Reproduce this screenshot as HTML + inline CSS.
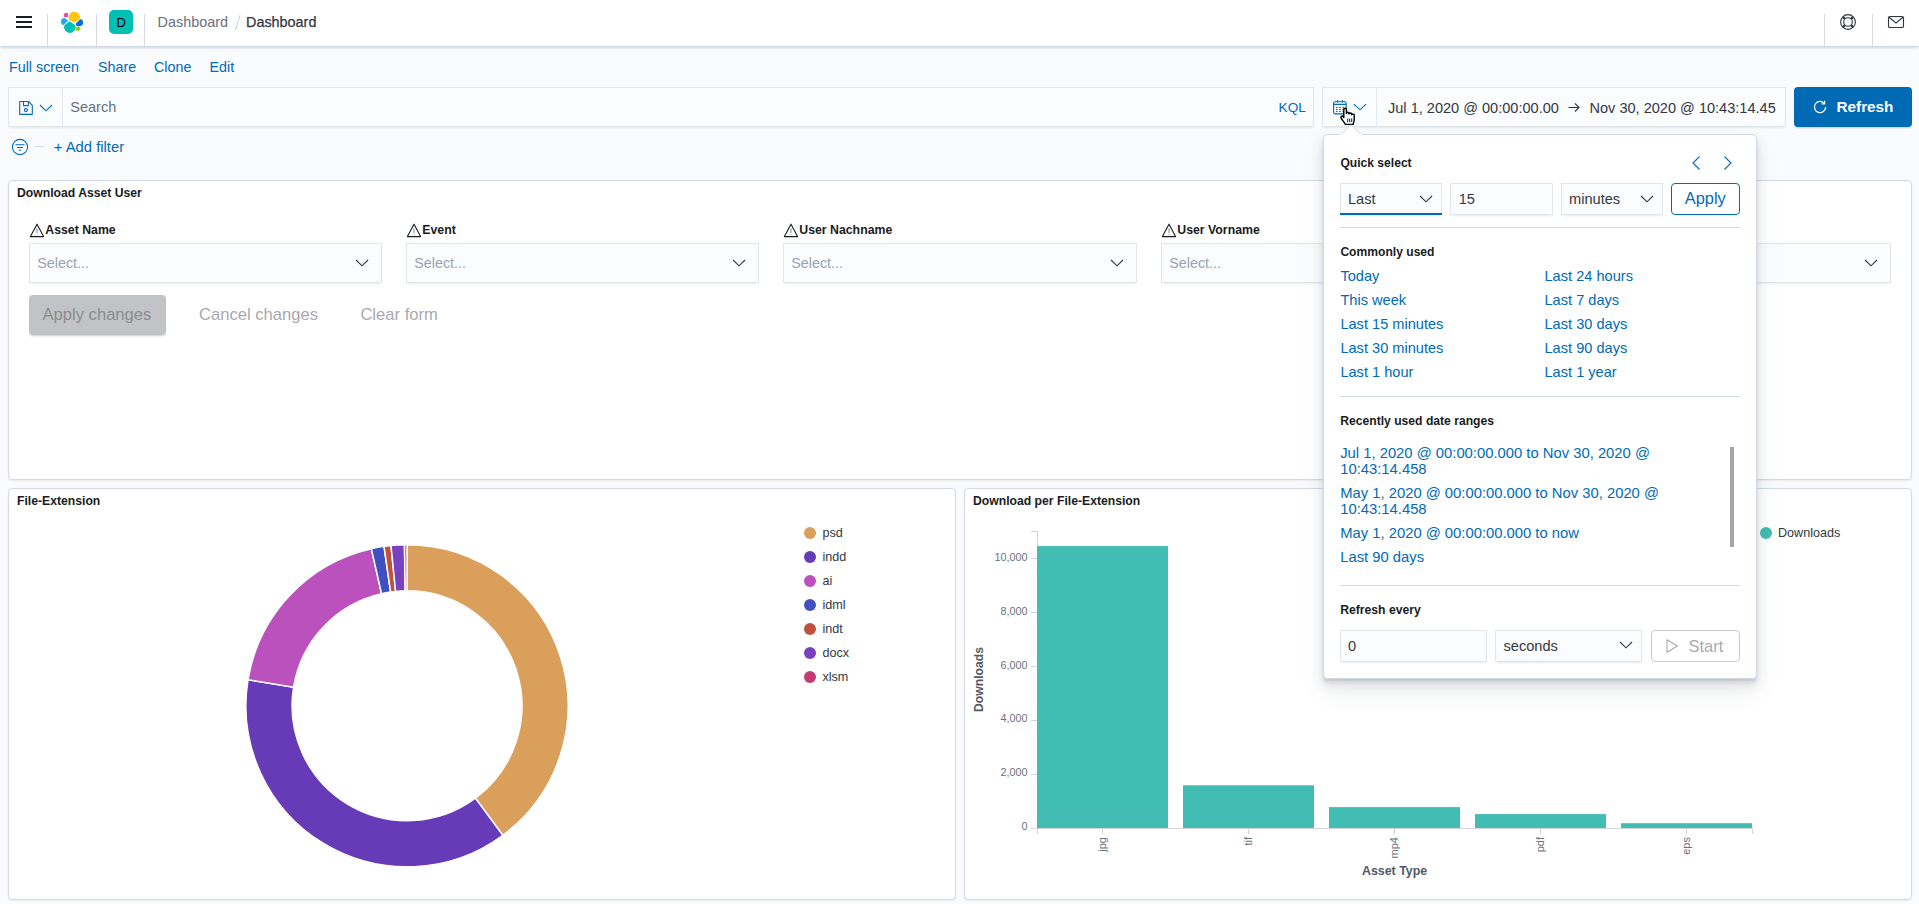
<!DOCTYPE html>
<html><head><meta charset="utf-8">
<style>
*{box-sizing:border-box;margin:0;padding:0}
html,body{width:1919px;height:904px;overflow:hidden}
body{background:#fafbfd;font-family:"Liberation Sans",sans-serif;color:#343741;position:relative}
.a{position:absolute}
.t{position:absolute;white-space:nowrap;line-height:1}
.hdr{left:0;top:0;width:1919px;height:47px;background:#fff;border-bottom:1px solid #d3dae6;box-shadow:0 2px 2px -1px rgba(152,162,179,.3),0 1px 5px -2px rgba(152,162,179,.3)}
.vsep{position:absolute;top:14px;width:1px;height:32px;background:#d3dae6}
.ctl{position:absolute;background:#fbfcfd;box-shadow:inset 0 0 0 1px rgba(15,36,56,.1),0 1px 1px -1px rgba(152,162,179,.2),0 3px 2px -2px rgba(152,162,179,.2)}
.panel{position:absolute;background:#fff;border:1px solid #d3dae6;border-radius:4px;box-shadow:0 1px 2px rgba(152,162,179,.15)}
svg{position:absolute;overflow:visible}
</style></head><body>
<div class="a hdr"></div>
<div class="a" style="left:16px;top:16px;width:16px;height:2px;background:#1a1c21"></div>
<div class="a" style="left:16px;top:21px;width:16px;height:2px;background:#1a1c21"></div>
<div class="a" style="left:16px;top:26px;width:16px;height:2px;background:#1a1c21"></div>
<div class="vsep" style="left:47px"></div>
<div class="vsep" style="left:96px"></div>
<div class="vsep" style="left:144px"></div>
<div class="vsep" style="left:1824px"></div>
<div class="vsep" style="left:1872px"></div>
<svg style="left:0;top:0" width="120" height="46">
<path d="M65.4 12.9H68V17.3H65.4A1.6 1.6 0 0 1 63.8 15.7V14.5A1.6 1.6 0 0 1 65.4 12.9Z" fill="#F04E98"/>
<path d="M69.2 19.9A5.7 5.7 0 1 1 79.7 19.3L74.4 22.6Z" fill="#FEC514"/>
<path d="M64.3 17.9L68.3 20.5L63.6 24.9Q61 24.6 61 21.4Q61.2 17.9 64.3 17.9Z" fill="#1BA9F5"/>
<path d="M64.3 25.3L69.5 21.3L75.3 25.2A5.8 5.8 0 1 1 64.3 25.3Z" fill="#00BFB3"/>
<path d="M75.7 23.5L80.5 18.9Q83.2 19.8 83.1 22.6Q83 25.8 80 26.2L77.3 26.2Q75.7 25.6 75.7 23.5Z" fill="#0077CC"/>
<path d="M76.1 27H79Q80.4 27 80.4 28.6Q80.2 31 77.3 31Q76.1 31 76.1 30Z" fill="#93C90E"/>
</svg>
<div class="a" style="left:109px;top:10px;width:24px;height:24px;border-radius:5px;background:#00bfb3"></div>
<div class="t" style="left:116.5px;top:15.50px;font-size:13px;color:#000;font-weight:normal;">D</div>
<div class="t" style="left:157.6px;top:14.61px;font-size:14.4px;color:#69707d;font-weight:normal;">Dashboard</div>
<svg style="left:0;top:0" width="260" height="46"><line x1="240.2" y1="15" x2="235.2" y2="30.7" stroke="#c9d0dc" stroke-width="1"/></svg>
<div class="t" style="left:246.0px;top:14.61px;font-size:14.4px;color:#343741;font-weight:normal;-webkit-text-stroke:0.25px #343741">Dashboard</div>
<svg style="left:1838px;top:12px" width="20" height="20" viewBox="0 0 20 20">
<circle cx="10" cy="10" r="7.4" fill="none" stroke="#343741" stroke-width="1.1"/>
<circle cx="10" cy="10" r="4.3" fill="none" stroke="#343741" stroke-width="1.1"/>
<path d="M4.9 4.9L7 7M15.1 4.9L13 7M4.9 15.1L7 13M15.1 15.1L13 13" stroke="#343741" stroke-width="2.2"/>
</svg>
<svg style="left:1886px;top:14px" width="20" height="16" viewBox="0 0 20 16">
<rect x="2.5" y="2.5" width="15" height="11" rx="1.3" fill="none" stroke="#343741" stroke-width="1.1"/>
<path d="M3 3.3L10 9L17 3.3" fill="none" stroke="#343741" stroke-width="1.1"/>
</svg>
<div class="t" style="left:9.0px;top:60.00px;font-size:14.3px;color:#006bb4;font-weight:normal;">Full screen</div>
<div class="t" style="left:98.0px;top:60.00px;font-size:14.3px;color:#006bb4;font-weight:normal;">Share</div>
<div class="t" style="left:154.0px;top:60.00px;font-size:14.3px;color:#006bb4;font-weight:normal;">Clone</div>
<div class="t" style="left:209.5px;top:60.00px;font-size:14.3px;color:#006bb4;font-weight:normal;">Edit</div>
<div class="ctl" style="left:8px;top:87px;width:1306px;height:40px"></div>
<div class="a" style="left:62px;top:88px;width:1px;height:38px;background:#e3e7ee"></div>
<svg style="left:18px;top:100px" width="16" height="16" viewBox="0 0 16 16">
<path d="M1.7 1.5H10.5L14.3 5.3V14.4H1.7Z" fill="none" stroke="#006bb4" stroke-width="1.1" stroke-linejoin="round"/>
<path d="M5.5 1.5V5.6H10.3V1.5" fill="none" stroke="#006bb4" stroke-width="1.1"/>
<circle cx="7.9" cy="10.1" r="1.5" fill="none" stroke="#006bb4" stroke-width="1.1"/>
</svg>
<svg style="left:39px;top:104px" width="14" height="8" viewBox="0 0 14 8"><path d="M1 1L7 6.8L13 1" fill="none" stroke="#006bb4" stroke-width="1.1"/></svg>
<div class="t" style="left:70.3px;top:100.03px;font-size:14.5px;color:#69707d;font-weight:normal;">Search</div>
<div class="t" style="left:1278.6px;top:100.89px;font-size:13.6px;color:#006bb4;font-weight:normal;">KQL</div>
<div class="ctl" style="left:1322px;top:87px;width:464px;height:40px"></div>
<div class="a" style="left:1376px;top:88px;width:1px;height:38px;background:#e3e7ee"></div>
<svg style="left:1332px;top:99px" width="16" height="17" viewBox="0 0 16 17">
<rect x="1.6" y="2.7" width="12.6" height="12.2" rx="1.6" fill="none" stroke="#006bb4" stroke-width="1.1"/>
<path d="M1.6 5.4H14.2M5.6 1V3.6M10.3 1V3.6" stroke="#006bb4" stroke-width="1.1"/>
<path d="M4 8.5h1.6M7.2 8.5h1.6M10.4 8.5h1.6M4 10.5h1.6M7.2 10.5h1.6M10.4 10.5h1.6M4 12.5h1.6M7.2 12.5h1.6M10.4 12.5h1.6" stroke="#006bb4" stroke-width="1.1"/>
</svg>
<svg style="left:1353px;top:103px" width="14" height="8" viewBox="0 0 14 8"><path d="M1 1.2L7 6.8L13 1.2" fill="none" stroke="#006bb4" stroke-width="1.1"/></svg>
<svg style="left:1339.5px;top:107px" width="17" height="19" viewBox="0 0 17 19">
<path d="M3.8 8.5V2.6C3.8 0.8 6.4 0.8 6.4 2.6V6.4C6.4 4.9 9 4.9 9 6.4V7C9 5.6 11.6 5.6 11.6 7V7.8C11.6 6.6 14.2 6.6 14.2 7.8V12.5C14.2 14.6 13.6 16 13 17.4H5.4C4.4 15.6 2.4 13.4 1.1 11.2C0.3 9.6 1.8 8.4 2.8 9.4L3.8 10.6Z" fill="#fff" stroke="#000" stroke-width="1.4" stroke-linejoin="round"/>
<path d="M7.7 11.5V15.2M9.7 11.5V15.2M11.7 11.5V15.2" stroke="#000" stroke-width="0.9"/>
</svg>
<div class="t" style="left:1388.0px;top:100.58px;font-size:14.55px;color:#343741;font-weight:normal;">Jul 1, 2020 @ 00:00:00.00</div>
<svg style="left:1566px;top:101px" width="16" height="12" viewBox="0 0 16 12"><path d="M2.5 6.5H13M9 2.5L13 6.5L9 10.5" fill="none" stroke="#343741" stroke-width="1.1"/></svg>
<div class="t" style="left:1589.5px;top:100.58px;font-size:14.55px;color:#343741;font-weight:normal;">Nov 30, 2020 @ 10:43:14.45</div>
<div class="a" style="left:1794px;top:87px;width:118px;height:40px;background:#006bb4;border-radius:4px;box-shadow:0 2px 2px -1px rgba(54,97,126,.3)"></div>
<svg style="left:1812px;top:99px" width="16" height="16" viewBox="0 0 16 16">
<path d="M12.2 4.3A5.6 5.6 0 1 0 13.6 8" fill="none" stroke="#fff" stroke-width="1.2"/>
<path d="M12.6 1.8V4.8H9.6" fill="none" stroke="#fff" stroke-width="1.2"/>
</svg>
<div class="t" style="left:1836.5px;top:99.15px;font-size:15.3px;color:#fff;font-weight:bold;">Refresh</div>
<svg style="left:11px;top:138px" width="18" height="18" viewBox="0 0 18 18">
<circle cx="9" cy="9" r="7.6" fill="none" stroke="#006bb4" stroke-width="1.1"/>
<path d="M4.5 6.8H13.5M6 9.5H12M7.7 12.2H10.3" stroke="#006bb4" stroke-width="1.1"/>
</svg>
<div class="a" style="left:34px;top:146px;width:10px;height:1px;background:#d3dae6"></div>
<div class="t" style="left:53.8px;top:139.77px;font-size:14.8px;color:#006bb4;font-weight:normal;">+ Add filter</div>
<div class="panel" style="left:8px;top:180px;width:1904px;height:300px"></div>
<div class="t" style="left:17.0px;top:186.67px;font-size:12.2px;color:#1a1c21;font-weight:bold;">Download Asset User</div>
<div class="ctl" style="left:29.0px;top:243px;width:353px;height:40px"></div>
<svg style="left:29.0px;top:223px" width="16" height="15" viewBox="0 0 16 15"><path d="M8 1.2L14.6 13.6H1.4Z" fill="none" stroke="#1a1c21" stroke-width="1.1" stroke-linejoin="round"/><path d="M8 5.5V10" stroke="#98a2b3" stroke-width="1.3"/><path d="M8 11.3V12.3" stroke="#98a2b3" stroke-width="1.1"/></svg>
<div class="t" style="left:45.3px;top:223.59px;font-size:12.3px;color:#1a1c21;font-weight:bold;">Asset Name</div>
<div class="t" style="left:37.3px;top:255.90px;font-size:14.3px;color:#98a2b3;font-weight:normal;">Select...</div>
<svg style="left:355.0px;top:259px" width="14" height="8" viewBox="0 0 14 8"><path d="M1 1L7 6.8L13 1" fill="none" stroke="#343741" stroke-width="1.1"/></svg>
<div class="ctl" style="left:406.0px;top:243px;width:353px;height:40px"></div>
<svg style="left:406.0px;top:223px" width="16" height="15" viewBox="0 0 16 15"><path d="M8 1.2L14.6 13.6H1.4Z" fill="none" stroke="#1a1c21" stroke-width="1.1" stroke-linejoin="round"/><path d="M8 5.5V10" stroke="#98a2b3" stroke-width="1.3"/><path d="M8 11.3V12.3" stroke="#98a2b3" stroke-width="1.1"/></svg>
<div class="t" style="left:422.3px;top:223.59px;font-size:12.3px;color:#1a1c21;font-weight:bold;">Event</div>
<div class="t" style="left:414.3px;top:255.90px;font-size:14.3px;color:#98a2b3;font-weight:normal;">Select...</div>
<svg style="left:732.0px;top:259px" width="14" height="8" viewBox="0 0 14 8"><path d="M1 1L7 6.8L13 1" fill="none" stroke="#343741" stroke-width="1.1"/></svg>
<div class="ctl" style="left:783.0px;top:243px;width:354px;height:40px"></div>
<svg style="left:783.0px;top:223px" width="16" height="15" viewBox="0 0 16 15"><path d="M8 1.2L14.6 13.6H1.4Z" fill="none" stroke="#1a1c21" stroke-width="1.1" stroke-linejoin="round"/><path d="M8 5.5V10" stroke="#98a2b3" stroke-width="1.3"/><path d="M8 11.3V12.3" stroke="#98a2b3" stroke-width="1.1"/></svg>
<div class="t" style="left:799.3px;top:223.59px;font-size:12.3px;color:#1a1c21;font-weight:bold;">User Nachname</div>
<div class="t" style="left:791.3px;top:255.90px;font-size:14.3px;color:#98a2b3;font-weight:normal;">Select...</div>
<svg style="left:1110.0px;top:259px" width="14" height="8" viewBox="0 0 14 8"><path d="M1 1L7 6.8L13 1" fill="none" stroke="#343741" stroke-width="1.1"/></svg>
<div class="ctl" style="left:1161.0px;top:243px;width:353px;height:40px"></div>
<svg style="left:1161.0px;top:223px" width="16" height="15" viewBox="0 0 16 15"><path d="M8 1.2L14.6 13.6H1.4Z" fill="none" stroke="#1a1c21" stroke-width="1.1" stroke-linejoin="round"/><path d="M8 5.5V10" stroke="#98a2b3" stroke-width="1.3"/><path d="M8 11.3V12.3" stroke="#98a2b3" stroke-width="1.1"/></svg>
<div class="t" style="left:1177.3px;top:223.59px;font-size:12.3px;color:#1a1c21;font-weight:bold;">User Vorname</div>
<div class="t" style="left:1169.3px;top:255.90px;font-size:14.3px;color:#98a2b3;font-weight:normal;">Select...</div>
<svg style="left:1487.0px;top:259px" width="14" height="8" viewBox="0 0 14 8"><path d="M1 1L7 6.8L13 1" fill="none" stroke="#343741" stroke-width="1.1"/></svg>
<div class="ctl" style="left:1538.0px;top:243px;width:353px;height:40px"></div>
<svg style="left:1864.0px;top:259px" width="14" height="8" viewBox="0 0 14 8"><path d="M1 1L7 6.8L13 1" fill="none" stroke="#343741" stroke-width="1.1"/></svg>
<div class="a" style="left:29px;top:295px;width:137px;height:40px;background:#c2c3c6;border-radius:4px;box-shadow:0 2px 2px -1px rgba(54,97,126,.3)"></div>
<div class="t" style="left:42.5px;top:307.45px;font-size:16.6px;color:#8b8c90;font-weight:normal;">Apply changes</div>
<div class="t" style="left:199.0px;top:307.45px;font-size:16.6px;color:#a8a9ad;font-weight:normal;">Cancel changes</div>
<div class="t" style="left:360.4px;top:307.45px;font-size:16.6px;color:#a8a9ad;font-weight:normal;">Clear form</div>
<div class="panel" style="left:8px;top:488px;width:948px;height:412px"></div>
<div class="t" style="left:17.0px;top:494.67px;font-size:12.2px;color:#1a1c21;font-weight:bold;">File-Extension</div>
<svg style="left:0;top:0" width="960" height="904"><path d="M407.00 544.65A161.1 161.1 0 0 1 502.83 835.25L475.35 798.11A114.9 114.9 0 0 0 407.00 590.85Z" fill="#DA9F5B" stroke="#fff" stroke-width="1.5" stroke-linejoin="miter"/><path d="M502.83 835.25A161.1 161.1 0 0 1 248.02 679.72L293.61 687.18A114.9 114.9 0 0 0 475.35 798.11Z" fill="#673AB8" stroke="#fff" stroke-width="1.5" stroke-linejoin="miter"/><path d="M248.02 679.72A161.1 161.1 0 0 1 371.31 548.65L381.54 593.71A114.9 114.9 0 0 0 293.61 687.18Z" fill="#BB51BC" stroke="#fff" stroke-width="1.5" stroke-linejoin="miter"/><path d="M371.31 548.65A161.1 161.1 0 0 1 384.02 546.30L390.61 592.02A114.9 114.9 0 0 0 381.54 593.71Z" fill="#3F51C1" stroke="#fff" stroke-width="1.5" stroke-linejoin="miter"/><path d="M384.02 546.30A161.1 161.1 0 0 1 391.00 545.45L395.59 591.42A114.9 114.9 0 0 0 390.61 592.02Z" fill="#C0503F" stroke="#fff" stroke-width="1.5" stroke-linejoin="miter"/><path d="M391.00 545.45A161.1 161.1 0 0 1 404.47 544.67L405.20 590.86A114.9 114.9 0 0 0 395.59 591.42Z" fill="#7A40C2" stroke="#fff" stroke-width="1.5" stroke-linejoin="miter"/><path d="M404.47 544.67A161.1 161.1 0 0 1 407.00 544.65L407.00 590.85A114.9 114.9 0 0 0 405.20 590.86Z" fill="#C63A73" stroke="#fff" stroke-width="1.5" stroke-linejoin="miter"/></svg>
<div class="a" style="left:804px;top:526.8px;width:12px;height:12px;border-radius:50%;background:#DA9F5B"></div>
<div class="t" style="left:822.4px;top:527.43px;font-size:12.6px;color:#343741;font-weight:normal;">psd</div>
<div class="a" style="left:804px;top:550.8px;width:12px;height:12px;border-radius:50%;background:#673AB8"></div>
<div class="t" style="left:822.4px;top:551.43px;font-size:12.6px;color:#343741;font-weight:normal;">indd</div>
<div class="a" style="left:804px;top:574.8px;width:12px;height:12px;border-radius:50%;background:#BB51BC"></div>
<div class="t" style="left:822.4px;top:575.43px;font-size:12.6px;color:#343741;font-weight:normal;">ai</div>
<div class="a" style="left:804px;top:598.8px;width:12px;height:12px;border-radius:50%;background:#3F51C1"></div>
<div class="t" style="left:822.4px;top:599.43px;font-size:12.6px;color:#343741;font-weight:normal;">idml</div>
<div class="a" style="left:804px;top:622.8px;width:12px;height:12px;border-radius:50%;background:#C0503F"></div>
<div class="t" style="left:822.4px;top:623.43px;font-size:12.6px;color:#343741;font-weight:normal;">indt</div>
<div class="a" style="left:804px;top:646.8px;width:12px;height:12px;border-radius:50%;background:#7A40C2"></div>
<div class="t" style="left:822.4px;top:647.43px;font-size:12.6px;color:#343741;font-weight:normal;">docx</div>
<div class="a" style="left:804px;top:670.8px;width:12px;height:12px;border-radius:50%;background:#C63A73"></div>
<div class="t" style="left:822.4px;top:671.43px;font-size:12.6px;color:#343741;font-weight:normal;">xlsm</div>
<div class="panel" style="left:964px;top:488px;width:948px;height:412px"></div>
<div class="t" style="left:973.0px;top:494.67px;font-size:12.2px;color:#1a1c21;font-weight:bold;">Download per File-Extension</div>
<svg style="left:0;top:0" width="1919" height="904"><path d="M1037.5 531V828.5M1031 531.5H1037.5M1031 828.5H1752.5" stroke="#d4d4d4" stroke-width="1" fill="none"/><path d="M1031 774.5H1037" stroke="#d4d4d4" stroke-width="1"/><path d="M1031 720.5H1037" stroke="#d4d4d4" stroke-width="1"/><path d="M1031 666.5H1037" stroke="#d4d4d4" stroke-width="1"/><path d="M1031 612.5H1037" stroke="#d4d4d4" stroke-width="1"/><path d="M1031 558.5H1037" stroke="#d4d4d4" stroke-width="1"/><rect x="1037" y="546.1" width="131" height="281.9" fill="#41bdb3"/><path d="M1102.5 828.5V834" stroke="#d4d4d4" stroke-width="1"/><rect x="1183" y="785.3" width="131" height="42.7" fill="#41bdb3"/><path d="M1248.5 828.5V834" stroke="#d4d4d4" stroke-width="1"/><rect x="1329" y="807.1" width="131" height="20.9" fill="#41bdb3"/><path d="M1394.5 828.5V834" stroke="#d4d4d4" stroke-width="1"/><rect x="1475" y="814.1" width="131" height="13.9" fill="#41bdb3"/><path d="M1540.5 828.5V834" stroke="#d4d4d4" stroke-width="1"/><rect x="1621" y="823.2" width="131" height="4.8" fill="#41bdb3"/><path d="M1686.5 828.5V834" stroke="#d4d4d4" stroke-width="1"/><path d="M1037.5 828.5V834M1752.5 828.5V834" stroke="#d4d4d4" stroke-width="1"/></svg>
<div class="t" style="right:891.5px;top:821.26px;font-size:10.8px;color:#69707d">0</div>
<div class="t" style="right:891.5px;top:767.36px;font-size:10.8px;color:#69707d">2,000</div>
<div class="t" style="right:891.5px;top:713.46px;font-size:10.8px;color:#69707d">4,000</div>
<div class="t" style="right:891.5px;top:659.56px;font-size:10.8px;color:#69707d">6,000</div>
<div class="t" style="right:891.5px;top:605.66px;font-size:10.8px;color:#69707d">8,000</div>
<div class="t" style="right:891.5px;top:551.76px;font-size:10.8px;color:#69707d">10,000</div>
<div class="t" style="left:1106.1px;top:836.8px;font-size:11px;color:#69707d;transform-origin:0 0;transform:rotate(-90deg) translate(-100%,-9.31px)">jpg</div>
<div class="t" style="left:1252.1px;top:836.8px;font-size:11px;color:#69707d;transform-origin:0 0;transform:rotate(-90deg) translate(-100%,-9.31px)">tif</div>
<div class="t" style="left:1398.1px;top:836.8px;font-size:11px;color:#69707d;transform-origin:0 0;transform:rotate(-90deg) translate(-100%,-9.31px)">mp4</div>
<div class="t" style="left:1544.1px;top:836.8px;font-size:11px;color:#69707d;transform-origin:0 0;transform:rotate(-90deg) translate(-100%,-9.31px)">pdf</div>
<div class="t" style="left:1690.1px;top:836.8px;font-size:11px;color:#69707d;transform-origin:0 0;transform:rotate(-90deg) translate(-100%,-9.31px)">eps</div>
<div class="t" style="left:1362.0px;top:864.60px;font-size:12.4px;color:#535966;font-weight:bold;">Asset Type</div>
<div class="t" style="left:983.4px;top:711.8px;font-size:12.2px;color:#535966;font-weight:bold;transform-origin:0 0;transform:rotate(-90deg) translate(0,-10.33px)">Downloads</div>
<div class="a" style="left:1760px;top:526.8px;width:12px;height:12px;border-radius:50%;background:#41bdb3"></div>
<div class="t" style="left:1778.0px;top:527.33px;font-size:12.6px;color:#343741;font-weight:normal;">Downloads</div>
<div class="a" style="left:1323px;top:134px;width:434px;height:544.5px;background:#fff;border:1px solid #d3dae6;border-radius:4px;box-shadow:0 12px 24px 0 rgba(65,78,101,.1),0 6px 12px 0 rgba(65,78,101,.1),0 4px 4px 0 rgba(65,78,101,.1),0 2px 2px 0 rgba(65,78,101,.1)"></div>
<svg style="left:1331px;top:123px" width="40" height="12" viewBox="0 0 40 12"><path d="M10 11.5L20 1.8L30 11.5" fill="#fff" stroke="#d3dae6" stroke-width="1"/><rect x="9" y="11" width="22" height="2" fill="#fff"/></svg>
<div class="t" style="left:1340.4px;top:156.86px;font-size:12.1px;color:#1a1c21;font-weight:bold;">Quick select</div>
<svg style="left:1690px;top:155px" width="46" height="16" viewBox="0 0 46 16"><path d="M9.5 1.5L3 8L9.5 14.5" fill="none" stroke="#006bb4" stroke-width="1.1"/><path d="M34.5 1.5L41 8L34.5 14.5" fill="none" stroke="#006bb4" stroke-width="1.1"/></svg>
<div class="ctl" style="left:1340px;top:183px;width:102px;height:32px"></div>
<div class="a" style="left:1340px;top:213px;width:102px;height:2px;background:#006bb4"></div>
<div class="t" style="left:1348.0px;top:191.94px;font-size:14.6px;color:#343741;font-weight:normal;">Last</div>
<svg style="left:1419px;top:195px" width="14" height="8" viewBox="0 0 14 8"><path d="M1 1L7 6.8L13 1" fill="none" stroke="#343741" stroke-width="1.1"/></svg>
<div class="ctl" style="left:1450px;top:183px;width:103px;height:32px"></div>
<div class="t" style="left:1458.7px;top:191.94px;font-size:14.6px;color:#343741;font-weight:normal;">15</div>
<div class="ctl" style="left:1561px;top:183px;width:102px;height:32px"></div>
<div class="t" style="left:1569.0px;top:191.94px;font-size:14.6px;color:#343741;font-weight:normal;">minutes</div>
<svg style="left:1640px;top:195px" width="14" height="8" viewBox="0 0 14 8"><path d="M1 1L7 6.8L13 1" fill="none" stroke="#343741" stroke-width="1.1"/></svg>
<div class="a" style="left:1671px;top:183px;width:69px;height:32px;border:1px solid #006bb4;border-radius:4px;background:#fff"></div>
<div class="t" style="left:1684.8px;top:190.42px;font-size:16.4px;color:#006bb4;font-weight:normal;">Apply</div>
<div class="a" style="left:1340px;top:227px;width:400px;height:1px;background:#d3dae6"></div>
<div class="t" style="left:1340.4px;top:246.06px;font-size:12.1px;color:#1a1c21;font-weight:bold;">Commonly used</div>
<div class="t" style="left:1340.4px;top:268.64px;font-size:14.6px;color:#006bb4;font-weight:normal;">Today</div>
<div class="t" style="left:1544.5px;top:268.64px;font-size:14.6px;color:#006bb4;font-weight:normal;">Last 24 hours</div>
<div class="t" style="left:1340.4px;top:292.64px;font-size:14.6px;color:#006bb4;font-weight:normal;">This week</div>
<div class="t" style="left:1544.5px;top:292.64px;font-size:14.6px;color:#006bb4;font-weight:normal;">Last 7 days</div>
<div class="t" style="left:1340.4px;top:316.64px;font-size:14.6px;color:#006bb4;font-weight:normal;">Last 15 minutes</div>
<div class="t" style="left:1544.5px;top:316.64px;font-size:14.6px;color:#006bb4;font-weight:normal;">Last 30 days</div>
<div class="t" style="left:1340.4px;top:340.64px;font-size:14.6px;color:#006bb4;font-weight:normal;">Last 30 minutes</div>
<div class="t" style="left:1544.5px;top:340.64px;font-size:14.6px;color:#006bb4;font-weight:normal;">Last 90 days</div>
<div class="t" style="left:1340.4px;top:364.64px;font-size:14.6px;color:#006bb4;font-weight:normal;">Last 1 hour</div>
<div class="t" style="left:1544.5px;top:364.64px;font-size:14.6px;color:#006bb4;font-weight:normal;">Last 1 year</div>
<div class="a" style="left:1340px;top:396px;width:400px;height:1px;background:#d3dae6"></div>
<div class="t" style="left:1340.2px;top:414.72px;font-size:12.15px;color:#1a1c21;font-weight:bold;">Recently used date ranges</div>
<div class="t" style="left:1340.2px;top:446.17px;font-size:14.8px;color:#006bb4;font-weight:normal;">Jul 1, 2020 @ 00:00:00.000 to Nov 30, 2020 @</div>
<div class="t" style="left:1340.2px;top:462.27px;font-size:14.8px;color:#006bb4;font-weight:normal;">10:43:14.458</div>
<div class="t" style="left:1340.2px;top:486.27px;font-size:14.8px;color:#006bb4;font-weight:normal;">May 1, 2020 @ 00:00:00.000 to Nov 30, 2020 @</div>
<div class="t" style="left:1340.2px;top:502.27px;font-size:14.8px;color:#006bb4;font-weight:normal;">10:43:14.458</div>
<div class="t" style="left:1340.2px;top:526.47px;font-size:14.8px;color:#006bb4;font-weight:normal;">May 1, 2020 @ 00:00:00.000 to now</div>
<div class="t" style="left:1340.2px;top:550.47px;font-size:14.8px;color:#006bb4;font-weight:normal;">Last 90 days</div>
<div class="a" style="left:1730px;top:447px;width:4px;height:100px;background:#a3a5aa;border-radius:0"></div>
<div class="a" style="left:1340px;top:585px;width:400px;height:1px;background:#d3dae6"></div>
<div class="t" style="left:1340.2px;top:603.97px;font-size:12.2px;color:#1a1c21;font-weight:bold;">Refresh every</div>
<div class="ctl" style="left:1340px;top:630px;width:147px;height:32px"></div>
<div class="t" style="left:1348.0px;top:638.64px;font-size:14.6px;color:#343741;font-weight:normal;">0</div>
<div class="ctl" style="left:1495px;top:630px;width:147px;height:32px"></div>
<div class="t" style="left:1503.5px;top:638.64px;font-size:14.6px;color:#343741;font-weight:normal;">seconds</div>
<svg style="left:1619px;top:641px" width="14" height="8" viewBox="0 0 14 8"><path d="M1 1L7 6.8L13 1" fill="none" stroke="#343741" stroke-width="1.1"/></svg>
<div class="a" style="left:1650.5px;top:630px;width:89px;height:32px;border:1px solid #c9cacd;border-radius:4px;background:#fff"></div>
<svg style="left:1665px;top:638px" width="14" height="16" viewBox="0 0 14 16"><path d="M2 1.8L12.5 8L2 14.2Z" fill="none" stroke="#a8a9ad" stroke-width="1.1" stroke-linejoin="round"/></svg>
<div class="t" style="left:1688.6px;top:637.62px;font-size:16.4px;color:#a8a9ad;font-weight:normal;">Start</div>
</body></html>
